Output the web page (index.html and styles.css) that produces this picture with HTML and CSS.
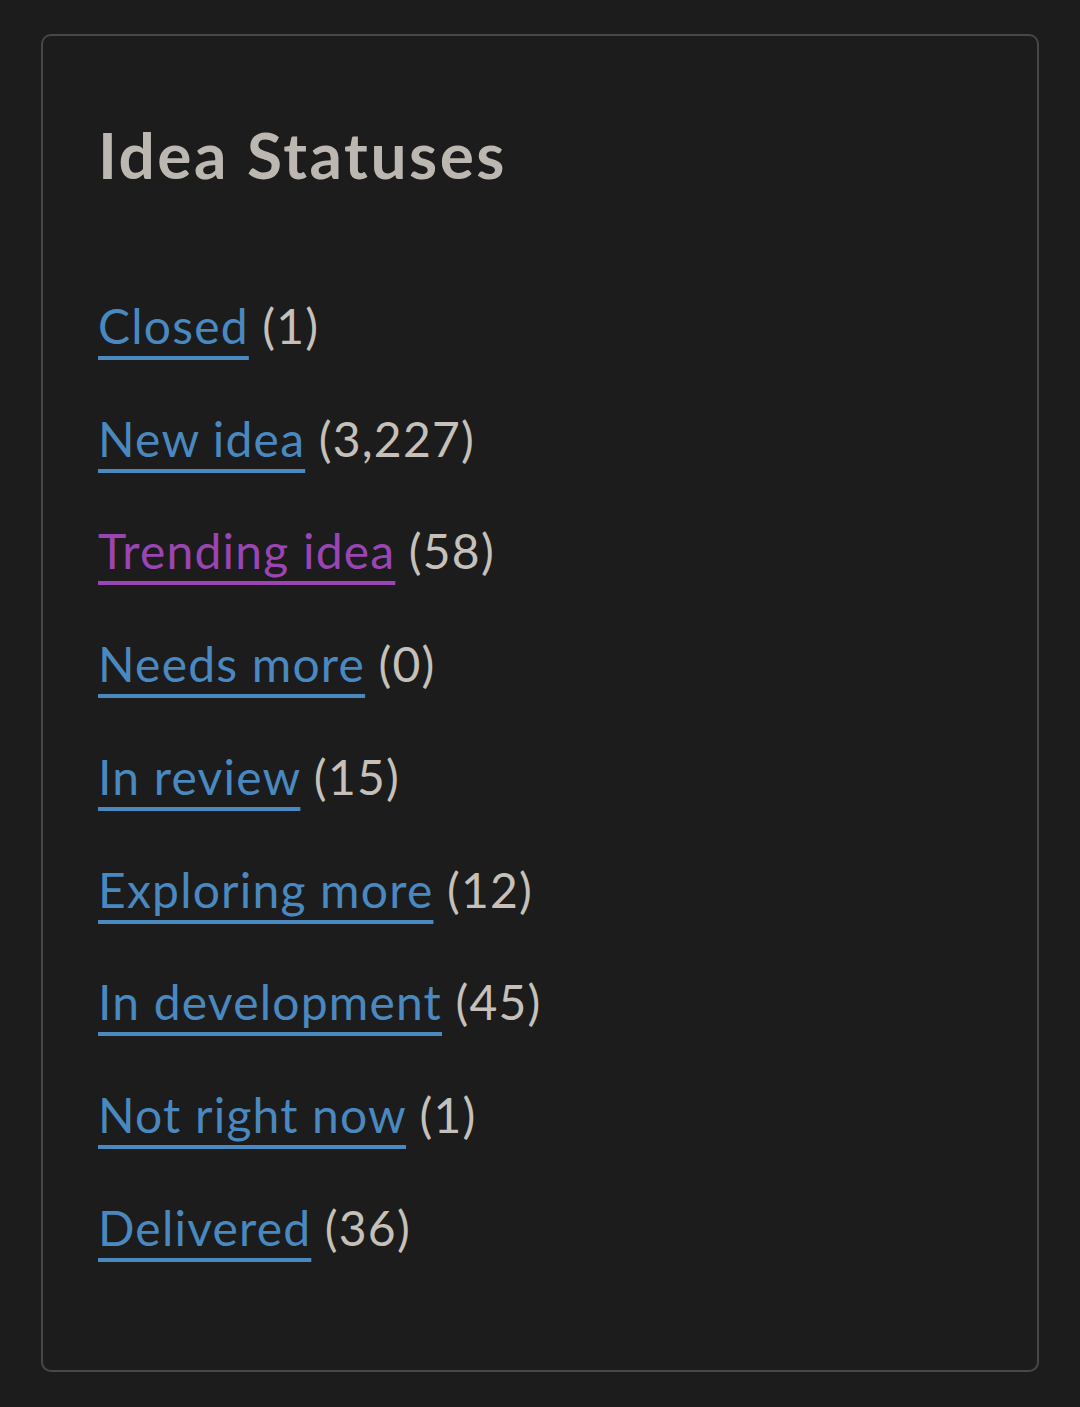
FILE: index.html
```html
<!DOCTYPE html>
<html lang="en">
<head>
    <meta charset="UTF-8">
    <meta name="viewport" content="width=device-width, initial-scale=1.0">
    <title>Idea Statuses</title>
    <link rel="stylesheet" href="styles.css">
</head>
<body>
    <div class="card">
        <h2 class="card-title">Idea Statuses</h2>

        <ul class="status-list">
            <li><a href="#">Closed</a> (1)</li>
            <li><a href="#">New idea</a> (3,227)</li>
            <li><a href="#" class="visited">Trending idea</a> (58)</li>
            <li><a href="#">Needs more</a> (0)</li>
            <li><a href="#">In review</a> (15)</li>
            <li><a href="#">Exploring more</a> (12)</li>
            <li><a href="#">In development</a> (45)</li>
            <li><a href="#">Not right now</a> (1)</li>
            <li><a href="#">Delivered</a> (36)</li>
        </ul>
    </div>
</body>
</html>
```

FILE: styles.css
```css
body {
    margin: 0;
    padding: 34px 41px;
    background-color: #1c1c1c;
    font-family: Lato, "Open Sans", sans-serif;
    color: #c5c0b9;
}
.card {
    border: 2px solid #474747;
    border-radius: 10px;
    padding: 81px 55px 106px;
}
.card-title {
    margin: 0 0 96px;
    font-size: 64px;
    font-weight: 700;
    line-height: 1.2;
    letter-spacing: 2.5px;
    color: #bcb7b0;
}
.status-list {
    list-style: none;
    margin: 0;
    padding: 0;
    display: flex;
    flex-direction: column;
    gap: 40.75px;
}
.status-list li {
    font-size: 48px;
    line-height: 72px;
    letter-spacing: 1.2px;
}
.status-list a {
    color: #4a88c0;
    text-decoration: underline;
    text-decoration-thickness: 4px;
    text-underline-offset: 12px;
}
.status-list a.visited {
    color: #9b44b4;
}
```
